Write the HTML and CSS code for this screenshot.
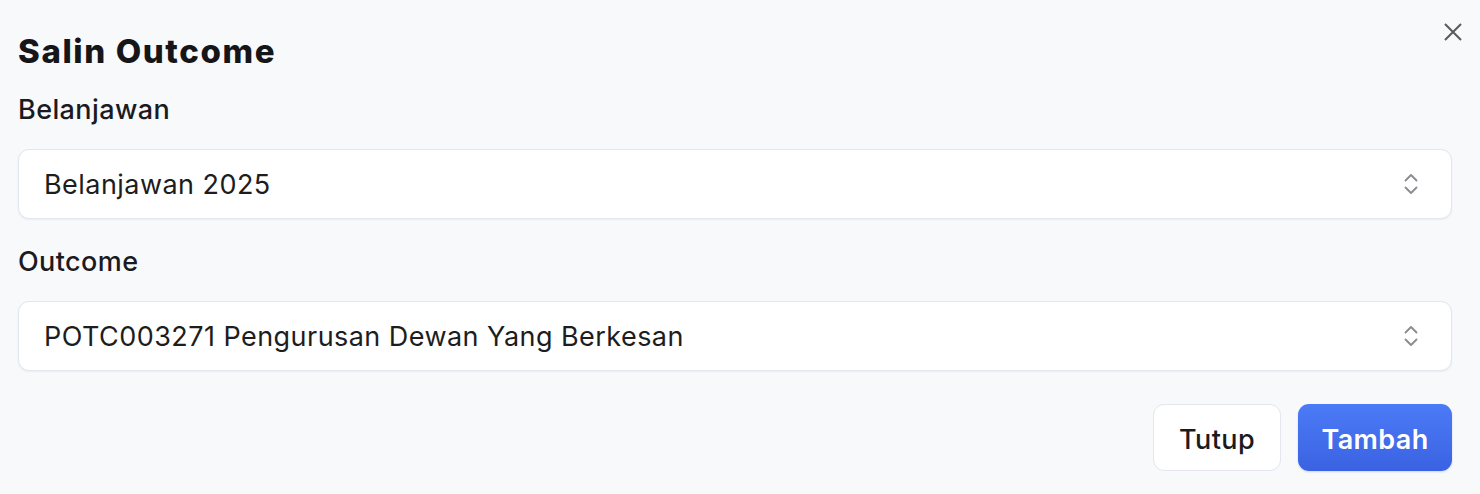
FILE: index.html
```html
<!DOCTYPE html>
<html lang="ms">
<head>
<meta charset="utf-8">
<link rel="stylesheet" href="styles.css">
</head>
<body>
<div class="dialog">
  <button class="close" aria-label="Tutup">
    <svg width="20" height="20" viewBox="0 0 20 20"><path d="M2 2 L18 18 M18 2 L2 18" stroke="#5a5a5e" stroke-width="2" fill="none"/></svg>
  </button>
  <h1 class="title">Salin Outcome</h1>
  <div class="field">
    <label class="label">Belanjawan</label>
    <div class="select">
      <span class="value">Belanjawan 2025</span>
      <svg class="chev" width="16" height="24" viewBox="0 0 16 24"><path d="M2.5 8.5 L8 3 L13.5 8.5 M2.5 15.5 L8 21 L13.5 15.5" stroke="#8a8a8f" stroke-width="1.8" fill="none" stroke-linecap="round" stroke-linejoin="round"/></svg>
    </div>
  </div>
  <div class="field">
    <label class="label">Outcome</label>
    <div class="select">
      <span class="value">POTC003271 Pengurusan Dewan Yang Berkesan</span>
      <svg class="chev" width="16" height="24" viewBox="0 0 16 24"><path d="M2.5 8.5 L8 3 L13.5 8.5 M2.5 15.5 L8 21 L13.5 15.5" stroke="#8a8a8f" stroke-width="1.8" fill="none" stroke-linecap="round" stroke-linejoin="round"/></svg>
    </div>
  </div>
  <div class="actions">
    <button class="btn btn-secondary">Tutup</button>
    <button class="btn btn-primary">Tambah</button>
  </div>
</div>
</body>
</html>
```

FILE: styles.css
```css
html, body {
  margin: 0;
  padding: 0;
  background: #f8f9fb;
}
body {
  font-family: Inter, "Noto Sans", sans-serif;
  color: #1b1b1f;
}
.dialog {
  position: relative;
  box-sizing: border-box;
  width: 1480px;
  height: 494px;
  padding: 31px 28px 0 18px;
}
.close {
  position: absolute;
  top: 22px;
  right: 17px;
  width: 20px;
  height: 20px;
  padding: 0;
  border: 0;
  background: transparent;
  display: flex;
}
.title {
  margin: 0;
  font-size: 33px;
  line-height: 40px;
  font-weight: 800;
  letter-spacing: 1.6px;
  color: #161618;
}
.field {
  display: flex;
  flex-direction: column;
}
.field:first-of-type {
  margin-top: 24px;
}
.field + .field {
  margin-top: 28px;
}
.label {
  font-size: 27px;
  line-height: 30px;
  font-weight: 500;
  letter-spacing: 0.4px;
  color: #1b1b1f;
  margin-bottom: 24px;
}
.select {
  box-sizing: border-box;
  height: 70px;
  background: #fff;
  border: 1.5px solid #e3e6ee;
  border-radius: 11px;
  box-shadow: 0 1px 2px rgba(20, 30, 60, 0.06);
  display: flex;
  align-items: center;
  justify-content: space-between;
  padding: 0 32px 0 25px;
}
.value {
  font-size: 27px;
  font-weight: 400;
  letter-spacing: 0.45px;
  color: #1d1d20;
}
.chev {
  display: block;
}
.actions {
  display: flex;
  justify-content: flex-end;
  gap: 17px;
  margin-top: 33px;
}
.btn {
  box-sizing: border-box;
  height: 67px;
  border-radius: 11px;
  font-family: Inter, "Noto Sans", sans-serif;
  font-size: 27px;
  letter-spacing: 0.4px;
  padding: 3px 0 0;
}
.btn-secondary {
  width: 128px;
  background: #fff;
  border: 1.5px solid #e3e6ee;
  color: #1b1b1f;
  font-weight: 500;
}
.btn-primary {
  width: 154px;
  border: 0;
  color: #fff;
  font-weight: 600;
  background: linear-gradient(180deg, #4c7bf6 0%, #3a62e2 100%);
  box-shadow: 0 1px 2px rgba(40, 70, 200, 0.2);
}
```
